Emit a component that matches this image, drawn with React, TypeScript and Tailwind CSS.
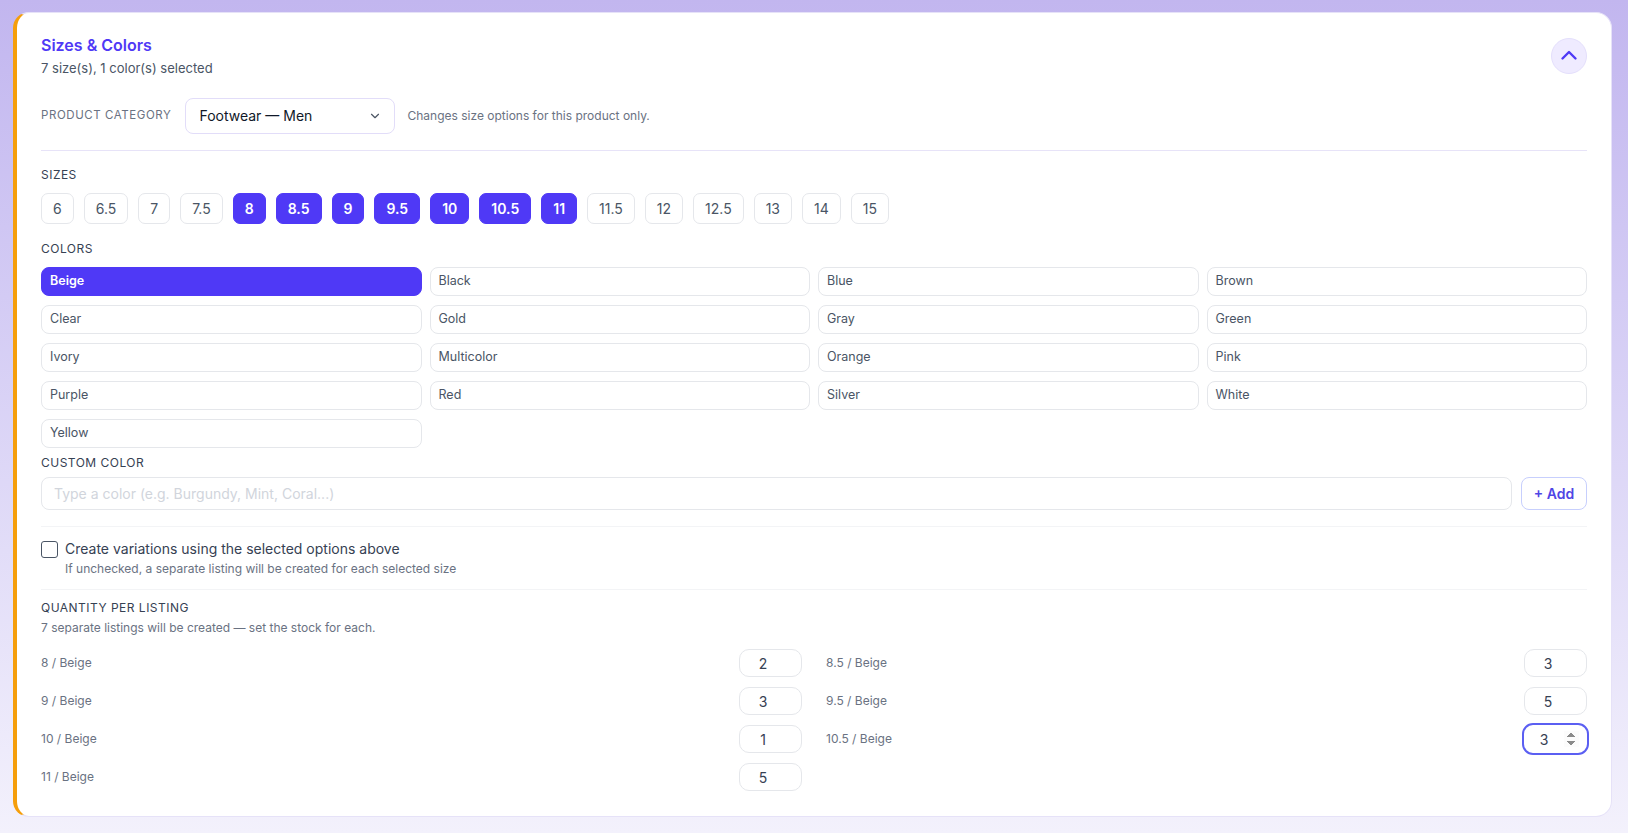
import { useState } from "react";

const SIZES = ["6", "6.5", "7", "7.5", "8", "8.5", "9", "9.5", "10", "10.5", "11", "11.5", "12", "12.5", "13", "14", "15"];
const SELECTED_SIZES = ["8", "8.5", "9", "9.5", "10", "10.5", "11"];
const COLORS = [
  "Beige", "Black", "Blue", "Brown",
  "Clear", "Gold", "Gray", "Green",
  "Ivory", "Multicolor", "Orange", "Pink",
  "Purple", "Red", "Silver", "White",
  "Yellow",
];

const QUANTITIES: Record<string, number> = {
  "8": 2,
  "8.5": 3,
  "9": 3,
  "9.5": 5,
  "10": 1,
  "10.5": 3,
  "11": 5,
};

function SectionLabel({ children }: { children: React.ReactNode }) {
  return <p className="text-xs uppercase leading-4 tracking-[0.04em] text-gray-700">{children}</p>;
}

export default function App() {
  const [sizes, setSizes] = useState<string[]>(SELECTED_SIZES);
  const [colors, setColors] = useState<string[]>(["Beige"]);
  const [qty, setQty] = useState(QUANTITIES);

  const toggle = (list: string[], set: (v: string[]) => void, v: string) =>
    set(list.includes(v) ? list.filter((x) => x !== v) : [...list, v]);

  return (
    <div
      className="min-h-screen bg-gradient-to-b from-[#c2b6ef] to-[#f3f1fc] pb-4 pl-[13px] pr-4 pt-3"
      style={{ fontFamily: "Inter, 'Noto Sans', sans-serif" }}
    >
      <div className="rounded-2xl border border-[#e6e2f8] border-l-4 border-l-[#f59e0b] bg-white pb-[25px] pl-6 pr-6 pt-5">
        {/* header */}
        <div className="flex items-start justify-between">
          <div>
            <h2 className="text-base font-semibold leading-6 text-[#4f39f6]">Sizes &amp; Colors</h2>
            <p className="mt-[2px] text-[13px] leading-[18px] text-gray-600">
              {sizes.length} size(s), {colors.length} color(s) selected
            </p>
          </div>
          <button className="mt-[5px] flex h-9 w-9 items-center justify-center rounded-full border border-[#e4dffc] bg-[#efebff]">
            <svg viewBox="0 0 24 24" className="h-6 w-6" fill="none" stroke="#4f39f6" strokeWidth="2.4" strokeLinecap="round" strokeLinejoin="round">
              <path d="M5.5 14.5l6.5-6.5 6.5 6.5" />
            </svg>
          </button>
        </div>

        {/* category */}
        <div className="mt-[21px] flex items-center">
          <span className="mr-[14px] text-[11.5px] uppercase tracking-[0.05em] text-gray-500">Product Category</span>
          <div className="flex h-9 w-[210px] items-center justify-between rounded-lg border border-[#e2ddf9] bg-white pl-[13px] pr-3">
            <span className="text-sm text-gray-900">Footwear — Men</span>
            <svg viewBox="0 0 24 24" className="h-3.5 w-3.5" fill="none" stroke="#4b5563" strokeWidth="2" strokeLinecap="round" strokeLinejoin="round">
              <path d="M6 9l6 6 6-6" />
            </svg>
          </div>
          <span className="ml-3 text-xs text-gray-500">Changes size options for this product only.</span>
        </div>

        <div className="mt-4 h-px bg-[#e7e3f8]" />

        {/* sizes */}
        <div className="mt-4">
          <SectionLabel>Sizes</SectionLabel>
          <div className="mt-[10px] flex flex-wrap gap-[10px]">
            {SIZES.map((s) => {
              const on = sizes.includes(s);
              return (
                <button
                  key={s}
                  onClick={() => toggle(sizes, setSizes, s)}
                  className={
                    on
                      ? "h-[31px] rounded-[7px] border border-[#4f39f6] bg-[#4f39f6] px-[11px] text-sm font-semibold text-white"
                      : "h-[31px] rounded-[7px] border border-gray-200 bg-white px-[11px] text-sm text-gray-600"
                  }
                >
                  {s}
                </button>
              );
            })}
          </div>
        </div>

        {/* colors */}
        <div className="mt-[17px]">
          <SectionLabel>Colors</SectionLabel>
          <div className="mt-[10px] grid grid-cols-4 gap-x-2 gap-y-[9px]">
            {COLORS.map((c) => {
              const on = colors.includes(c);
              return (
                <button
                  key={c}
                  onClick={() => toggle(colors, setColors, c)}
                  className={
                    on
                      ? "h-[29px] rounded-lg border border-[#4f39f6] bg-[#4f39f6] pl-2 text-left text-[12.5px] font-semibold text-white"
                      : "h-[29px] rounded-lg border border-gray-200 bg-white pl-2 text-left text-[12.5px] text-gray-600"
                  }
                >
                  {c}
                </button>
              );
            })}
          </div>
        </div>

        {/* custom color */}
        <div className="mt-[7px]">
          <SectionLabel>Custom Color</SectionLabel>
          <div className="mt-[6px] flex gap-[9px]">
            <input
              placeholder="Type a color (e.g. Burgundy, Mint, Coral...)"
              className="h-[33px] flex-1 rounded-lg border border-gray-200 px-3 text-sm text-gray-700 outline-none placeholder:text-gray-300"
            />
            <button className="h-[33px] w-[66px] rounded-lg border border-[#c7cffd] text-sm font-semibold text-[#4f46e5]">
              + Add
            </button>
          </div>
        </div>

        <div className="mt-4 h-px bg-gray-100" />

        {/* variations */}
        <div className="mt-3">
          <label className="flex h-5 items-center gap-[7px]">
            <span className="h-[17px] w-[17px] rounded-[3px] border-[1.5px] border-gray-600 bg-white" />
            <span className="text-sm leading-5 text-gray-700">Create variations using the selected options above</span>
          </label>
          <p className="ml-6 mt-[2px] text-xs leading-4 text-gray-500">
            If unchecked, a separate listing will be created for each selected size
          </p>
        </div>

        <div className="mt-3 h-px bg-gray-100" />

        {/* quantity */}
        <div className="mt-[10px]">
          <SectionLabel>Quantity per listing</SectionLabel>
          <p className="mt-1 text-xs leading-4 text-gray-500">
            {sizes.length} separate listings will be created — set the stock for each.
          </p>
          <div className="mt-[13px] grid grid-cols-2 gap-x-6 gap-y-[10px]">
            {SELECTED_SIZES.map((s) => {
              const focused = s === "10.5";
              return (
                <div key={s} className="flex h-7 items-center justify-between">
                  <span className="text-xs text-gray-500">{s} / Beige</span>
                  <input
                    type="number"
                    autoFocus={focused}
                    value={qty[s]}
                    onChange={(e) => setQty({ ...qty, [s]: Number(e.target.value) })}
                    className={
                      focused
                        ? "-mr-[2px] h-8 w-[67px] rounded-[11px] border-2 border-[#5b5ff2] pr-2 text-center text-sm text-gray-700 outline-none"
                        : "h-7 w-[63px] rounded-[10px] border border-gray-200 text-center text-sm text-gray-700 outline-none"
                    }
                  />
                </div>
              );
            })}
          </div>
        </div>
      </div>
    </div>
  );
}
